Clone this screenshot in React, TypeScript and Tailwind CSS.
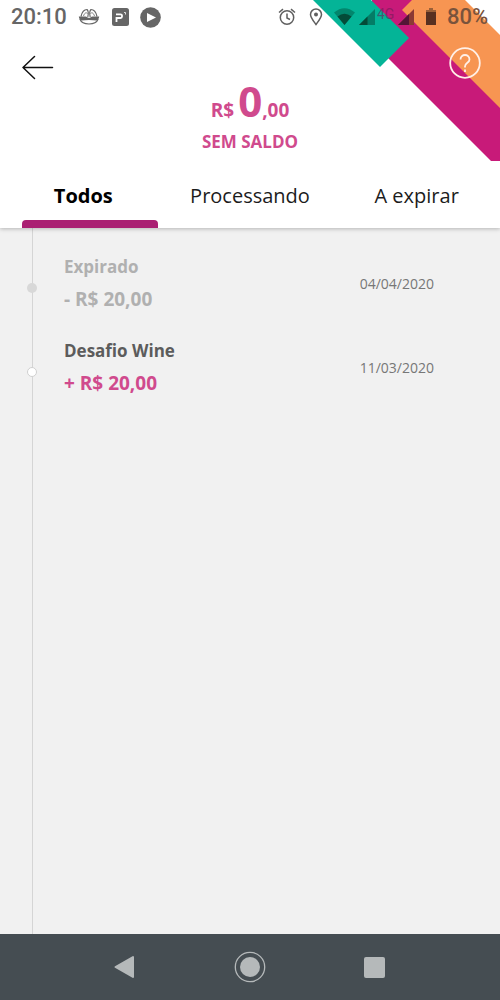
import type { ReactNode } from "react";

type Entry = { title: string; amount: string; date: string; kind: "expired" | "credit" };

const entries: Entry[] = [
  { title: "Expirado", amount: "- R$ 20,00", date: "04/04/2020", kind: "expired" },
  { title: "Desafio Wine", amount: "+ R$ 20,00", date: "11/03/2020", kind: "credit" },
];

function Ribbons() {
  return (
    <svg className="absolute top-0 right-0 h-[161px] w-[190px]" viewBox="310 0 190 161" aria-hidden="true">
      <path d="M372 0H412L500 88V161H491L372 42Z" fill="#c81a79" />
      <path d="M412 0H465L500 35V108L402 10L412 0Z" fill="#f79552" />
      <path d="M313 0H371L409 38L380 67Z" fill="#04b497" />
    </svg>
  );
}

function StatusBar() {
  return (
    <div className="relative flex h-[34px] items-center justify-between px-[11px] font-[Roboto,sans-serif] text-[#666666]">
      <div className="flex items-center">
        <span className="w-[67px] text-[22px] leading-none font-medium">20:10</span>
        <svg className="h-[18px] w-[22px]" viewBox="0 0 22 18" fill="none" stroke="currentColor" aria-hidden="true">
          <path d="M3 8.500C4 4 6.500 1.500 9 1.500C10.500 3 10.500 6 9.800 9M19 8.500C18 4 15.500 1.500 13 1.500C11.500 3 11.500 6 12.200 9" strokeWidth="1.200" />
          <path d="M5.500 8C6.500 5 8 4 9.500 5.500M16.500 8C15.500 5 14 4 12.500 5.500" strokeWidth="0.800" />
          <path d="M0.800 8.500H7.500C9 8.500 9.500 10 11 10S13 8.500 14.500 8.500H21.200C21 10.500 20 12 18.500 12.500Q11 11.500 3.500 12.500C2 12 1 10.500 0.800 8.500Z" fill="currentColor" stroke="none" />
          <path d="M1.800 11C3 14 7 16 11 16S19 14 20.200 11" strokeWidth="1.200" />
        </svg>
        <svg className="ml-3 h-[18px] w-[17px]" viewBox="0 0 17 18" aria-hidden="true">
          <rect width="17" height="18" rx="2.500" fill="currentColor" />
          <path d="M4.500 14V10H8.500Q10 10 10 8.500V7.500Q10 6.300 8.500 6.300H4" fill="none" stroke="white" strokeWidth="1.800" />
          <path d="M12 4.500H13.500V6.500" fill="none" stroke="white" strokeWidth="0.800" />
        </svg>
        <svg className="ml-[11px] size-[21px]" viewBox="0 0 21 21" aria-hidden="true">
          <circle cx="10.500" cy="10.500" r="10.300" fill="currentColor" />
          <path d="M7 6L16 10.500L7 15Z" fill="white" />
        </svg>
      </div>
      <div className="flex items-center">
        <svg className="h-[22px] w-[161px]" viewBox="278 6 161 22" aria-hidden="true">
          <g fill="none" stroke="#5f5f5f" strokeWidth="1.500">
            <circle cx="287" cy="17.500" r="6.700" />
            <path d="M287 13.500V18L290 19.500M279 12.500L283 9.200M295 12.500L291 9.200" />
            <path d="M316 24.500C313 20.500 310.500 17.500 310.500 14.500A5.500 5.500 0 0 1 321.500 14.500C321.500 17.500 319 20.500 316 24.500Z" />
          </g>
          <circle cx="316" cy="14.500" r="2" fill="#5f5f5f" />
          <path d="M334 12.500Q344.500 4 355 12.500L344.500 25Z" fill="#02866d" />
          <path d="M337.500 16.500Q344.500 11 351.500 16.500L344.500 25Z" fill="#044b38" />
          <path d="M375 9V25H359Z" fill="#047d66" />
          <path d="M367.500 16.500V25H359Z" fill="#044b38" />
          <text x="377" y="19" fontSize="14" fontFamily="Roboto, sans-serif" fill="#701c57" opacity="0.600">4G</text>
          <path d="M414 9V25H398Z" fill="#8b3a34" />
          <path d="M409 14V25H398Z" fill="#551536" />
          <path d="M429 8H433V10H436V25H426V10H429Z" fill="#583020" />
          <path d="M429 8H433V10H436V12H426V10H429Z" fill="#9b6038" />
        </svg>
        <span className="ml-2 w-[42px] text-[22px] leading-none font-medium text-[#79533c]">80%</span>
      </div>
    </div>
  );
}

function Tab({ children, active = false }: { children: ReactNode; active?: boolean }) {
  return (
    <button
      type="button"
      role="tab"
      aria-selected={active}
      className={
        active
          ? "relative flex h-full items-center justify-center font-bold text-black"
          : "relative flex h-full items-center justify-center text-[#1c1c1c]"
      }
    >
      {children}
      {active && <span className="absolute right-[9px] bottom-0 left-[22px] h-2 rounded-t bg-[#aa2073]" />}
    </button>
  );
}

function TimelineRow({ entry }: { entry: Entry }) {
  const expired = entry.kind === "expired";
  return (
    <li className="relative flex h-[84px] items-start justify-between pr-[66px] pl-16">
      <span
        className={
          expired
            ? "absolute top-[37px] left-[27px] size-[10px] rounded-full bg-[#d8d8d8]"
            : "absolute top-[37px] left-[27px] size-[10px] rounded-full border border-[#d0d0d0] bg-white"
        }
      />
      <div className={expired ? "pt-[9px] font-bold text-[#b0b0b0]" : "pt-[9px] font-bold text-[#5c5c5c]"}>
        <p className="text-[17px] leading-6">{entry.title}</p>
        <p className={expired ? "mt-2 text-[19px] leading-6" : "mt-2 text-[19px] leading-6 text-[#d04a8d]"}>
          {entry.amount}
        </p>
      </div>
      <time className="mt-7 text-[14px] leading-5 text-[#777777]">{entry.date}</time>
    </li>
  );
}

function NavigationBar() {
  return (
    <nav className="flex h-[66px] justify-center bg-[#454d52] text-[#b5b9ba]" aria-label="Sistema">
      <button type="button" aria-label="Voltar" className="flex w-[124px] items-center justify-center pr-1">
        <svg className="h-[24px] w-[21px]" viewBox="0 0 21 24" aria-hidden="true">
          <path d="M1.500 12L19 2V22Z" fill="currentColor" stroke="currentColor" strokeWidth="2" strokeLinejoin="round" />
        </svg>
      </button>
      <button type="button" aria-label="Início" className="flex w-[124px] items-center justify-center">
        <svg className="size-8" viewBox="0 0 32 32" aria-hidden="true">
          <circle cx="16" cy="16" r="14.700" fill="none" stroke="currentColor" strokeWidth="1.300" />
          <circle cx="16" cy="16" r="10" fill="currentColor" />
        </svg>
      </button>
      <button type="button" aria-label="Recentes" className="flex w-[124px] items-center justify-center">
        <span className="size-[21px] rounded-[2px] bg-current" />
      </button>
    </nav>
  );
}

export default function App() {
  return (
    <div className="flex min-h-screen flex-col bg-[#f1f1f1] font-['Open_Sans',sans-serif]">
      <header className="relative z-10 bg-white shadow-[0_1px_4px_rgba(0,0,0,0.25)]">
        <Ribbons />
        <StatusBar />
        <div className="relative flex h-[50px] items-start justify-between pr-[19px] pl-[22px]">
          <button type="button" aria-label="Voltar" className="mt-[21px]">
            <svg className="h-[25px] w-8" viewBox="0 0 32 25" fill="none" stroke="#111111" strokeWidth="1.500" strokeLinecap="round" strokeLinejoin="round" aria-hidden="true">
              <path d="M30.500 12.500H1M12.500 1.500L1 12.500L12.500 23.500" />
            </svg>
          </button>
          <button type="button" aria-label="Ajuda" className="mt-[13px]">
            <svg className="size-8" viewBox="0 0 32 32" fill="none" stroke="#fff0e8" strokeWidth="1.800" aria-hidden="true">
              <circle cx="16" cy="16" r="14.800" />
              <path d="M11.500 12.500C11.500 6.500 20.500 6.500 20.500 12.500C20.500 16 16 15.500 16 19.500V20.500M16 22.500V25" />
            </svg>
          </button>
        </div>
        <section className="relative text-center font-bold text-[#d04a8d]" aria-label="Saldo">
          <p className="flex h-[46px] items-baseline justify-center text-[19px] leading-[34px]">
            <span>R$</span>
            <span className="ml-1 text-[42px]">0</span>
            <span>,00</span>
          </p>
          <p className="h-[34px] text-[17px] leading-6">SEM SALDO</p>
        </section>
        <div role="tablist" className="grid h-16 grid-cols-3 text-[20px]">
          <Tab active>Todos</Tab>
          <Tab>Processando</Tab>
          <Tab>A expirar</Tab>
        </div>
      </header>
      <main className="relative flex-1">
        <div className="absolute inset-y-0 left-8 w-px bg-[#d5d5d5]" />
        <ul className="pt-[18px]">
          {entries.map((entry) => (
            <TimelineRow key={entry.date} entry={entry} />
          ))}
        </ul>
      </main>
      <NavigationBar />
    </div>
  );
}
